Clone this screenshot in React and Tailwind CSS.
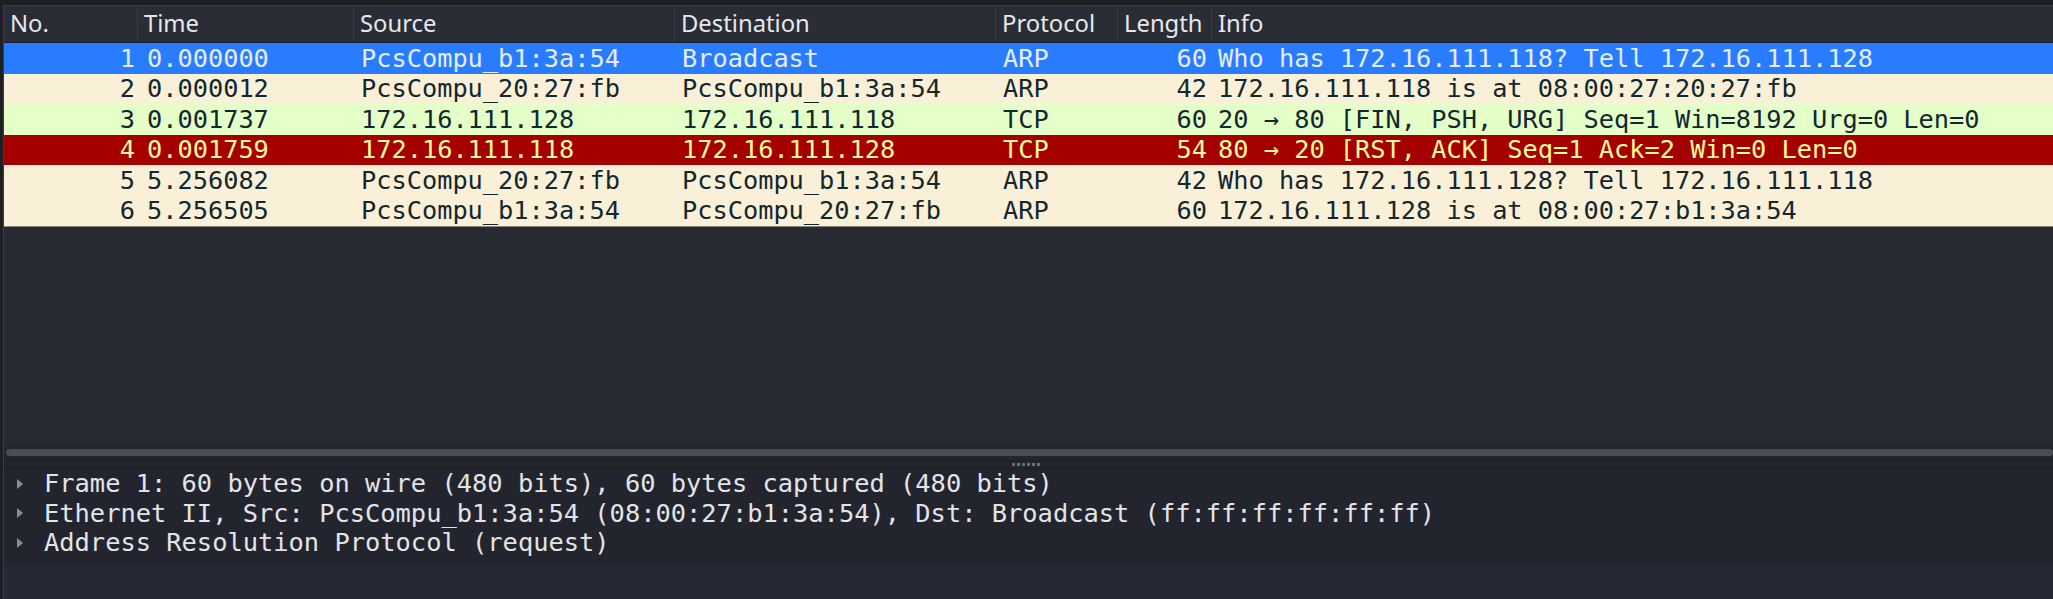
const columns = [
  { key: "no", label: "No.", w: "w-[134px]", align: "text-right pr-[3px]" },
  { key: "time", label: "Time", w: "w-[216px]", align: "pl-[9px]" },
  { key: "src", label: "Source", w: "w-[321px]", align: "pl-[7px]" },
  { key: "dst", label: "Destination", w: "w-[321px]", align: "pl-[7px]" },
  { key: "proto", label: "Protocol", w: "w-[122px]", align: "pl-[7px]" },
  { key: "len", label: "Length", w: "w-[94px]", align: "text-right pr-[5px]" },
  { key: "info", label: "Info", w: "flex-1", align: "pl-[6px]" },
];

const packets = [
  {
    no: 1, time: "0.000000", src: "PcsCompu_b1:3a:54", dst: "Broadcast", proto: "ARP", len: 60,
    info: "Who has 172.16.111.118? Tell 172.16.111.128",
    row: "bg-[#2a7cff] text-[#e4ecff]",
  },
  {
    no: 2, time: "0.000012", src: "PcsCompu_20:27:fb", dst: "PcsCompu_b1:3a:54", proto: "ARP", len: 42,
    info: "172.16.111.118 is at 08:00:27:20:27:fb",
    row: "bg-[#faf0d7] text-[#12272e]",
  },
  {
    no: 3, time: "0.001737", src: "172.16.111.128", dst: "172.16.111.118", proto: "TCP", len: 60,
    info: "20 \u2192 80 [FIN, PSH, URG] Seq=1 Win=8192 Urg=0 Len=0",
    row: "bg-[#e4ffc7] text-[#12272e]",
  },
  {
    no: 4, time: "0.001759", src: "172.16.111.118", dst: "172.16.111.128", proto: "TCP", len: 54,
    info: "80 \u2192 20 [RST, ACK] Seq=1 Ack=2 Win=0 Len=0",
    row: "bg-[#a40000] text-[#fffc9c]",
  },
  {
    no: 5, time: "5.256082", src: "PcsCompu_20:27:fb", dst: "PcsCompu_b1:3a:54", proto: "ARP", len: 42,
    info: "Who has 172.16.111.128? Tell 172.16.111.118",
    row: "bg-[#faf0d7] text-[#12272e]",
  },
  {
    no: 6, time: "5.256505", src: "PcsCompu_b1:3a:54", dst: "PcsCompu_20:27:fb", proto: "ARP", len: 60,
    info: "172.16.111.128 is at 08:00:27:b1:3a:54",
    row: "bg-[#faf0d7] text-[#12272e]",
  },
];

const details = [
  "Frame 1: 60 bytes on wire (480 bits), 60 bytes captured (480 bits)",
  "Ethernet II, Src: PcsCompu_b1:3a:54 (08:00:27:b1:3a:54), Dst: Broadcast (ff:ff:ff:ff:ff:ff)",
  "Address Resolution Protocol (request)",
];

const mono = "font-['DejaVu_Sans_Mono','Liberation_Mono',monospace]";

function Arrow() {
  return (
    <svg viewBox="0 0 6 10" className="w-[6px] h-[10px] shrink-0" aria-hidden="true">
      <path fill="#8a8c92" d="M0 0l6 5-6 5z" />
    </svg>
  );
}

export default function App() {
  return (
    <div className="w-[2053px] h-[599px] bg-[#1d1f24] flex flex-col overflow-hidden select-none">
      <div className="h-[5px] shrink-0" />

      <div className="flex-1 flex flex-col ml-[3px] border-l border-[#3b3e46] bg-[#272a33]">
        {/* packet list */}
        <div className="h-[439px] shrink-0 flex flex-col">
          <div className="h-[38px] shrink-0 flex bg-[#2a2d35] border-t border-[#3a3d45] border-b border-b-[#1c1e23] font-['Noto_Sans',sans-serif] text-[23.8px] text-[#e6e8ec]">
            {columns.map((c) => (
              <div
                key={c.key}
                className={`${c.w} shrink-0 flex items-center pl-[6px] border-r border-[#3a3d45] last:border-r-0`}
              >
                {c.label}
              </div>
            ))}
          </div>

          <div className={`${mono} text-[25.3px]`}>
            {packets.map((p) => (
              <div key={p.no} className={`h-[30.5px] flex items-center leading-none whitespace-pre ${p.row}`}>
                {columns.map((c) => (
                  <div key={c.key} className={`${c.w} shrink-0 ${c.align}`}>
                    {p[c.key]}
                  </div>
                ))}
              </div>
            ))}
            <div className="h-px bg-[#8a8579]" />
          </div>
        </div>

        {/* horizontal scrollbar + splitter */}
        <div className="h-[16px] shrink-0 flex items-center pl-[2px] bg-[#24262e]">
          <div className="h-[7px] flex-1 rounded-full bg-[#4c4e54]" />
        </div>
        <div className="h-[9px] shrink-0 flex items-center justify-center border-t border-[#1b1d22] border-b border-b-[#1b1d22] bg-[#23252d] pr-[6px]">
          <div className="flex gap-[2px]">
            {[0, 1, 2, 3, 4, 5].map((i) => (
              <span key={i} className="w-[3px] h-[3px] bg-[#6a6c73]" />
            ))}
          </div>
        </div>

        {/* packet details */}
        <div className={`h-[95px] shrink-0 bg-[#22252e] ${mono} text-[25.4px] text-[#e3e4e8]`}>
          {details.map((d) => (
            <div key={d} className="h-[29.5px] flex items-center whitespace-pre leading-none">
              <div className="w-[40px] shrink-0 flex justify-end pr-[21px]">
                <Arrow />
              </div>
              <span>{d}</span>
            </div>
          ))}
        </div>

        <div className="flex-1 bg-[#262833]" />
      </div>
    </div>
  );
}
